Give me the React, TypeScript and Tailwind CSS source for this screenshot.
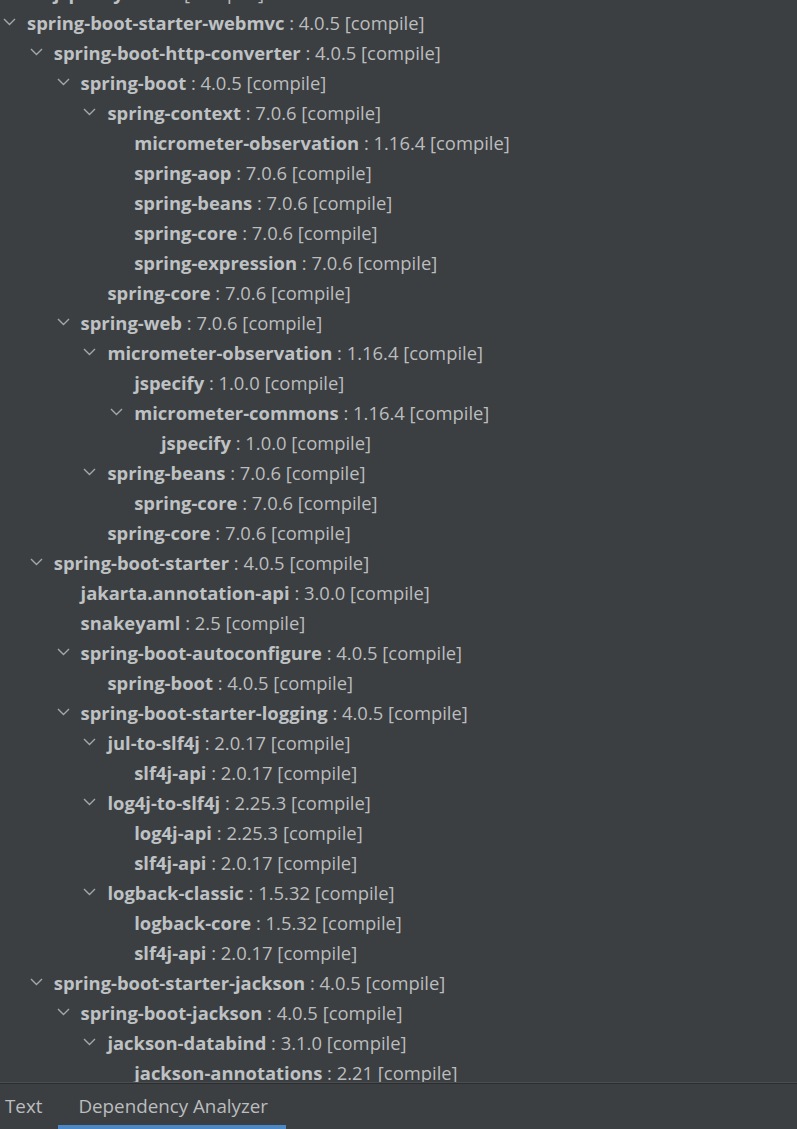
import React from 'react';

type Node = { name: string; ver: string; level: number; open?: boolean };

const rows: Node[] = [
  { name: 'jspecify', ver: '1.0.0', level: 1 },
  { name: 'spring-boot-starter-webmvc', ver: '4.0.5', level: 0, open: true },
  { name: 'spring-boot-http-converter', ver: '4.0.5', level: 1, open: true },
  { name: 'spring-boot', ver: '4.0.5', level: 2, open: true },
  { name: 'spring-context', ver: '7.0.6', level: 3, open: true },
  { name: 'micrometer-observation', ver: '1.16.4', level: 4 },
  { name: 'spring-aop', ver: '7.0.6', level: 4 },
  { name: 'spring-beans', ver: '7.0.6', level: 4 },
  { name: 'spring-core', ver: '7.0.6', level: 4 },
  { name: 'spring-expression', ver: '7.0.6', level: 4 },
  { name: 'spring-core', ver: '7.0.6', level: 3 },
  { name: 'spring-web', ver: '7.0.6', level: 2, open: true },
  { name: 'micrometer-observation', ver: '1.16.4', level: 3, open: true },
  { name: 'jspecify', ver: '1.0.0', level: 4 },
  { name: 'micrometer-commons', ver: '1.16.4', level: 4, open: true },
  { name: 'jspecify', ver: '1.0.0', level: 5 },
  { name: 'spring-beans', ver: '7.0.6', level: 3, open: true },
  { name: 'spring-core', ver: '7.0.6', level: 4 },
  { name: 'spring-core', ver: '7.0.6', level: 3 },
  { name: 'spring-boot-starter', ver: '4.0.5', level: 1, open: true },
  { name: 'jakarta.annotation-api', ver: '3.0.0', level: 2 },
  { name: 'snakeyaml', ver: '2.5', level: 2 },
  { name: 'spring-boot-autoconfigure', ver: '4.0.5', level: 2, open: true },
  { name: 'spring-boot', ver: '4.0.5', level: 3 },
  { name: 'spring-boot-starter-logging', ver: '4.0.5', level: 2, open: true },
  { name: 'jul-to-slf4j', ver: '2.0.17', level: 3, open: true },
  { name: 'slf4j-api', ver: '2.0.17', level: 4 },
  { name: 'log4j-to-slf4j', ver: '2.25.3', level: 3, open: true },
  { name: 'log4j-api', ver: '2.25.3', level: 4 },
  { name: 'slf4j-api', ver: '2.0.17', level: 4 },
  { name: 'logback-classic', ver: '1.5.32', level: 3, open: true },
  { name: 'logback-core', ver: '1.5.32', level: 4 },
  { name: 'slf4j-api', ver: '2.0.17', level: 4 },
  { name: 'spring-boot-starter-jackson', ver: '4.0.5', level: 1, open: true },
  { name: 'spring-boot-jackson', ver: '4.0.5', level: 2, open: true },
  { name: 'jackson-databind', ver: '3.1.0', level: 3, open: true },
  { name: 'jackson-annotations', ver: '2.21', level: 4 },
];

const Chevron = () => (
  <svg width="13" height="8" viewBox="0 0 13 8" className="mt-[-3px]">
    <polyline points="1,1 6.5,6.5 12,1" fill="none" stroke="#a4a7a9" strokeWidth="1.4" />
  </svg>
);

const Row = ({ node }: { node: Node }) => (
  <div
    className="flex items-center h-[30px] whitespace-nowrap"
    style={{ paddingLeft: 3 + node.level * 26.8 }}
  >
    <div className="w-[24px] shrink-0 flex items-center">{node.open && <Chevron />}</div>
    <span className="font-bold text-[#bfc2c4]">{node.name}</span>
    <span className="text-[#bbbdbf]">&nbsp;: {node.ver} [compile]</span>
  </div>
);

export default function App() {
  return (
    <div
      className="w-[797px] h-[1129px] bg-[#3c3f41] flex flex-col overflow-hidden text-[18.4px]"
      style={{ fontFamily: '"Open Sans", "Noto Sans", sans-serif' }}
    >
      <div className="flex-1 overflow-hidden">
        <div className="-mt-[22px]">
          {rows.map((r, i) => (
            <Row key={i} node={r} />
          ))}
        </div>
      </div>
      <div className="h-px bg-[#4b4e50]" />
      <div className="h-px bg-[#2b2d2e]" />
      <div className="h-[45px] flex items-stretch text-[#bbbdbf] text-[18.8px]">
        <div className="pl-[5px] pr-[16px] flex items-center">Text</div>
        <div className="relative flex items-center pl-[20px] w-[228px]">
          Dependency Analyzer
          <div className="absolute left-0 right-0 bottom-0 h-[4px] bg-[#4a88c7]" />
        </div>
      </div>
    </div>
  );
}
